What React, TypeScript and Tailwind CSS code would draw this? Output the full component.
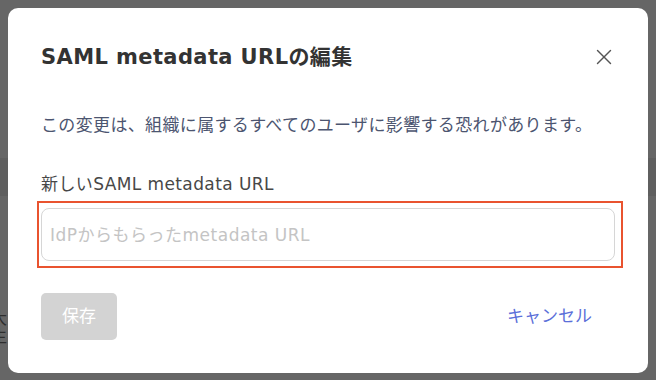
import { X } from "lucide-react";

const font = { fontFamily: '"DejaVu Sans", "Noto Sans CJK JP", sans-serif' };

const EditMetadataModal = () => {
  return (
    <div className="absolute left-[8px] top-[8px] w-[640px] h-[365px] bg-white rounded-[10px] px-[33px] pt-[35px] pb-[33px] flex flex-col">
      <div className="flex items-center justify-between h-[28px]">
        <h2 className="text-[21px] font-bold text-[#333333] leading-[28px] tracking-[0.4px]">
          SAML metadata URLの編集
        </h2>
        <button className="text-[#555555] -mr-[2px]">
          <X size={26} strokeWidth={1.3} />
        </button>
      </div>

      <p className="mt-[42px] text-[17px] leading-[24px] text-[#4c5570] tracking-[0.35px]">
        この変更は、組織に属するすべてのユーザに影響する恐れがあります。
      </p>

      <label className="mt-[35px] text-[17px] leading-[24px] text-[#474747] tracking-[0.4px]">
        新しいSAML metadata URL
      </label>

      <div className="mt-[5px] -ml-[4px] w-[586px] border-2 border-[#e9532f] pl-[2px] pr-[6px] py-[5px]">
        <input
          className="w-full h-[53px] border border-[#d6d6d6] rounded-[8px] px-[8px] text-[17px] tracking-[0.5px] placeholder:text-[#c4c4c4] outline-none"
          style={font}
          placeholder="IdPからもらったmetadata URL"
        />
      </div>

      <div className="mt-auto flex items-center justify-between">
        <button className="w-[76px] h-[47px] rounded-[5px] bg-[#d3d3d3] text-white text-[17px]">
          保存
        </button>
        <button className="text-[#5b6fd9] text-[17px] px-[23px] h-[47px]">
          キャンセル
        </button>
      </div>
    </div>
  );
};

export default function App() {
  return (
    <div className="relative w-[656px] h-[380px] bg-[#666666] overflow-hidden" style={font}>
      <div className="flex flex-col">
        <div className="h-[158px]" />
        <div className="h-[38px] bg-[#5f5f5f]" />
        <div className="mt-[114px] -ml-[9px] flex flex-col text-[16px] leading-[18px] text-[#2e2e2e]">
          <span>大</span>
          <span>生</span>
        </div>
      </div>
      <EditMetadataModal />
    </div>
  );
}
